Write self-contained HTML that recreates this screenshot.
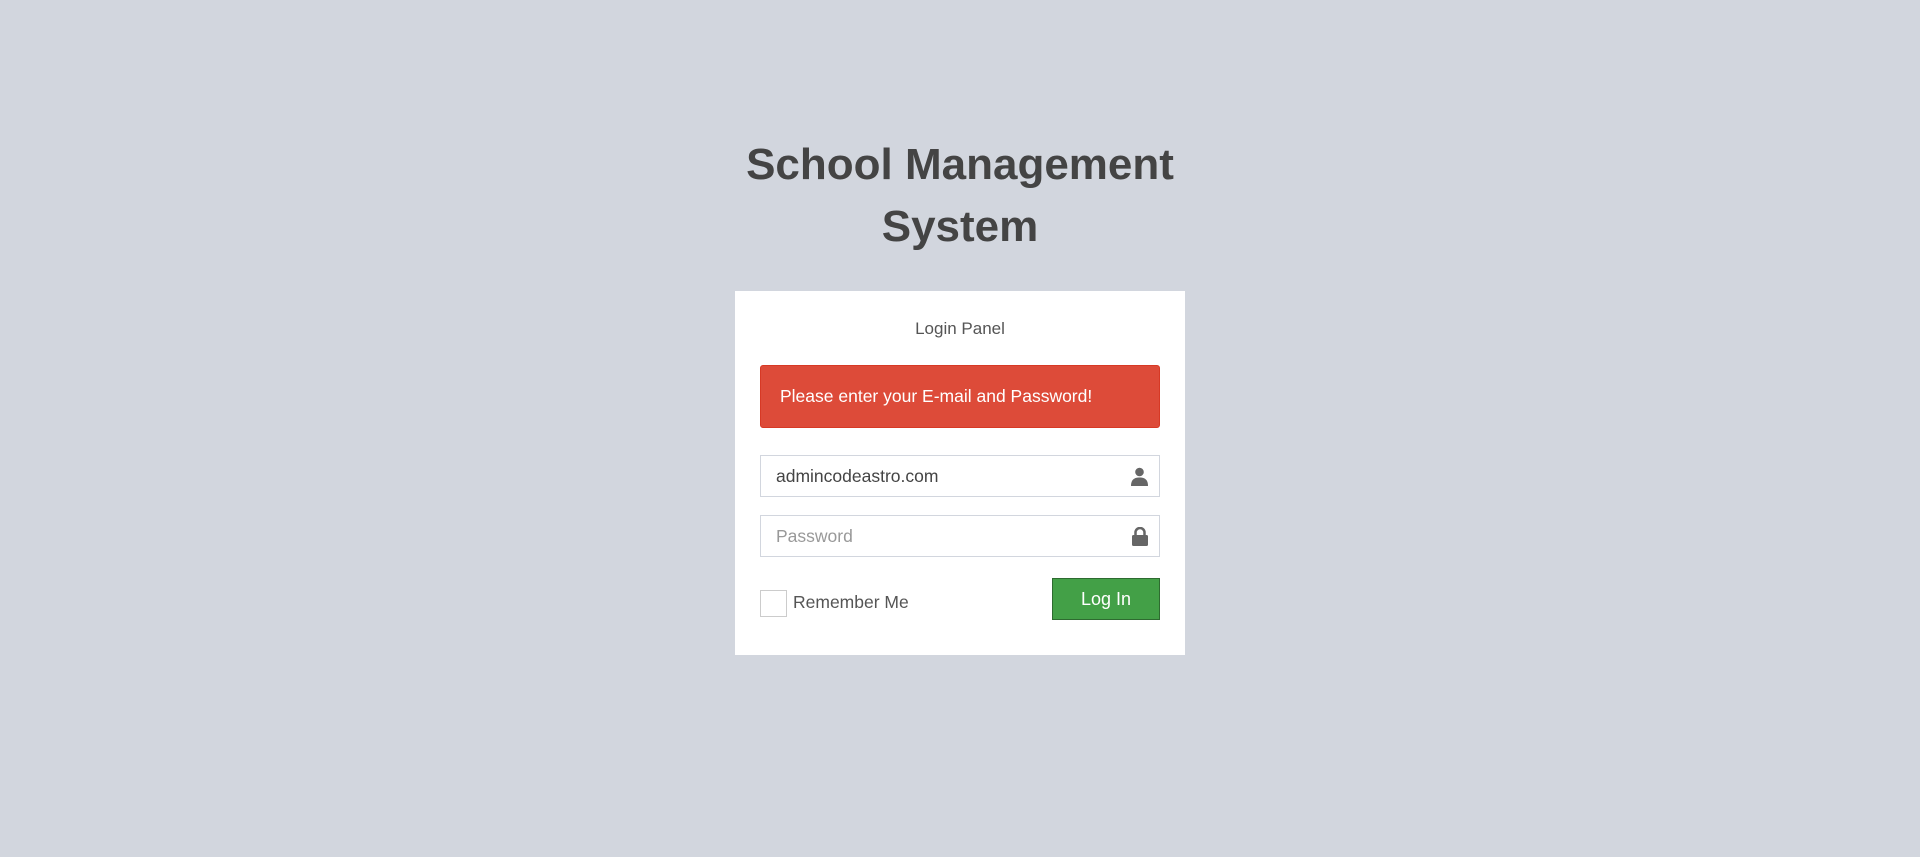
<!DOCTYPE html>
<html><head><meta charset="utf-8"><style>
html,body{margin:0;padding:0;}
body{width:1920px;height:857px;background:#d2d6de;font-family:"Liberation Sans",Arial,sans-serif;position:relative;overflow:hidden;}
.title{position:absolute;left:0;width:1920px;top:134px;text-align:center;font-size:44px;font-weight:bold;color:#444;line-height:62px;}
.panel{position:absolute;left:735px;top:291px;width:450px;height:364px;background:#fff;}
.lp{position:absolute;left:0;width:450px;top:28px;text-align:center;font-size:17px;color:#555;}
.alert{position:absolute;left:25px;top:74px;height:61px;background:#dd4b39;border:1px solid #d73925;border-radius:3px;color:#fff;font-size:17.5px;line-height:61px;padding-left:19px;box-sizing:content-box;width:379px;}
.inp{position:absolute;left:25px;height:40px;border:1px solid #d2d6de;font-size:17.5px;line-height:40px;padding-left:15px;box-sizing:content-box;width:383px;}
.icon{position:absolute;right:10px;top:11px;}
.cb{position:absolute;left:25px;top:299px;width:25px;height:25px;border:1px solid #ccc;}
.rm{position:absolute;left:58px;top:301px;font-size:17.5px;color:#555;}
.btn{position:absolute;left:317px;top:287px;width:106px;height:40px;background:#43a047;border:1px solid #2e6b30;color:#fff;font-size:18px;text-align:center;line-height:40px;}
</style></head><body>
<div class="title">School Management<br>System</div>
<div class="panel">
<div class="lp">Login Panel</div>
<div class="alert">Please enter your E-mail and Password!</div>
<div class="inp" style="top:164px;color:#444;">admincodeastro.com<svg class="icon" width="19" height="19" viewBox="0 0 19 19"><circle cx="9.5" cy="5" r="4.3" fill="#666"/><path d="M1 19 C1 12 5 10.5 9.5 10.5 C14 10.5 18 12 18 19Z" fill="#666"/></svg></div>
<div class="inp" style="top:224px;color:#999;">Password<svg class="icon" width="18" height="19" viewBox="0 0 18 19"><path d="M4.5 8 V5.5 A4.5 4.5 0 0 1 13.5 5.5 V8" stroke="#666" stroke-width="2.5" fill="none"/><rect x="1" y="8" width="16" height="11" rx="1.5" fill="#666"/></svg></div>
<div class="cb"></div>
<div class="rm">Remember Me</div>
<div class="btn">Log In</div>
</div>
</body></html>
